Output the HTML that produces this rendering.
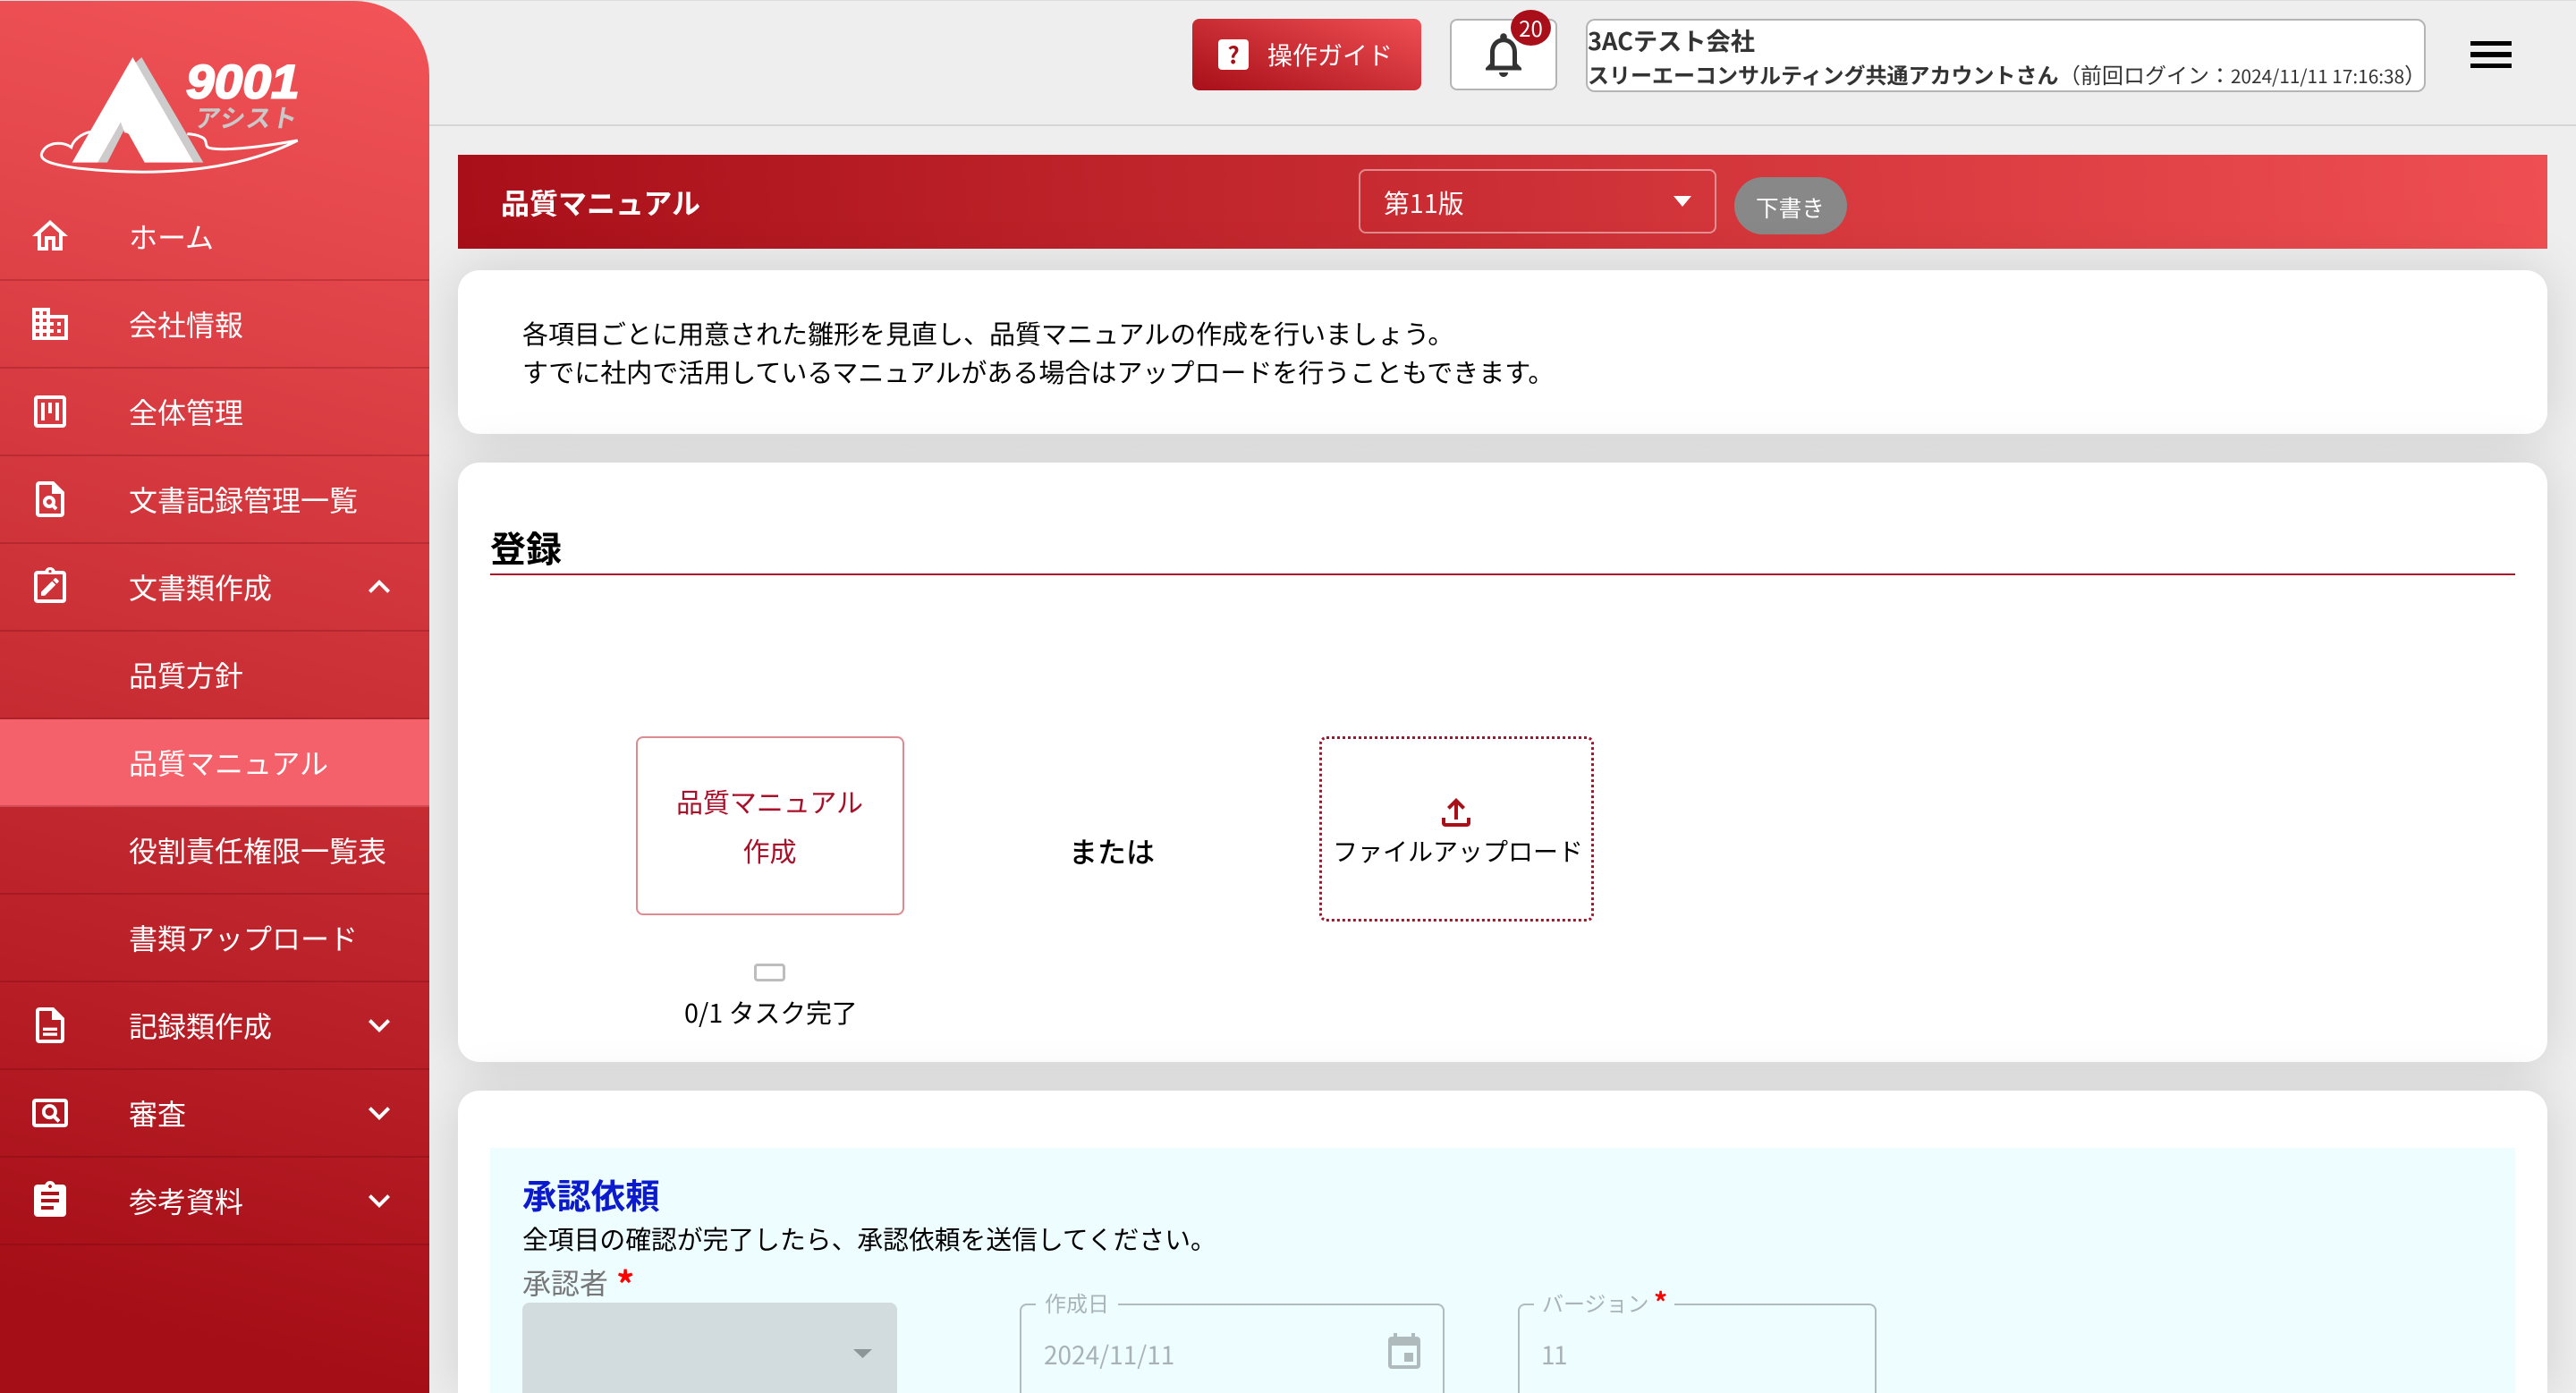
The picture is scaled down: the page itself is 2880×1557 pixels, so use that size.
<!DOCTYPE html>
<html lang="ja"><head><meta charset="utf-8"><title>品質マニュアル</title>
<style>
html,body{margin:0;padding:0;width:2880px;height:1557px;overflow:hidden}
body{background:#eee;font-family:"Noto Sans CJK JP","Liberation Sans",sans-serif;color:#000}
#page{position:relative;width:2880px;height:1557px;overflow:hidden;background:#eee}
.a{position:absolute}
.t{position:absolute;white-space:nowrap;line-height:40px}
svg{position:absolute;display:block}
#side{left:0;top:1px;width:480px;height:1556px;background:linear-gradient(14deg,#a60e17 7%,#f25458 100%);border-top-right-radius:84px;overflow:hidden;z-index:5}
.r{position:absolute;left:0;height:96px;line-height:96px;border-bottom:2px solid rgba(90,0,5,.22);color:#fff;font-size:32px;padding-left:144px;box-sizing:content-box;white-space:nowrap;width:336px}
.r svg{left:32px;top:24px;width:48px;height:48px;fill:#fff}
.r svg.c{left:400px}
.card{position:absolute;left:512px;width:2336px;background:#fff;border-radius:24px;box-shadow:0 0 60px rgba(0,0,0,.13)}
</style></head><body><div id="page">
<div class="a" style="left:0;top:0;width:2880px;height:1px;background:#ddd"></div>
<div class="a" style="left:480px;top:139px;width:2400px;height:2px;background:#d6d6d6"></div>

<!-- top bar -->
<div class="a" style="left:1333px;top:21px;width:256px;height:80px;border-radius:8px;background:linear-gradient(20deg,#a80f18,#ef4f54)"></div>
<div class="a" style="left:1362px;top:44px;width:34px;height:34px;border-radius:4px;background:#fff;color:#a80f18;font-weight:700;font-size:26px;line-height:34px;text-align:center">?</div>
<div class="t" style="left:1417px;top:41px;font-size:28px;color:#fff">操作ガイド</div>
<div class="a" style="left:1621px;top:21px;width:120px;height:80px;box-sizing:border-box;background:#fff;border:2px solid #b4b4b4;border-radius:8px"></div>
<svg style="left:1651px;top:31px" width="60" height="60" viewBox="0 0 24 24" fill="#333"><path d="M12 22c1.1 0 2-.9 2-2h-4c0 1.1.9 2 2 2zm6-6v-5c0-3.07-1.63-5.64-4.5-6.32V4c0-.83-.67-1.5-1.5-1.5s-1.5.67-1.5 1.5v.68C7.64 5.36 6 7.92 6 11v5l-2 2v1h16v-1l-2-2zm-2 1H8v-6c0-2.48 1.51-4.5 4-4.5s4 2.02 4 4.5v6z"/></svg>
<div class="a" style="left:1689px;top:11px;width:45px;height:40px;border-radius:50%;background:#a80f18;color:#fff;font-size:24px;line-height:40px;text-align:center">20</div>
<div class="a" style="left:1773px;top:21px;width:939px;height:82px;box-sizing:border-box;background:#fff;border:2px solid #b4b4b4;border-radius:10px"></div>
<div class="t" style="left:1775px;top:24px;font-size:27.2px;font-weight:700;color:#333">3ACテスト会社</div>
<div class="t" style="left:1775px;top:63px;font-size:24px;font-weight:700;color:#333">スリーエーコンサルティング共通アカウントさん</div>
<div class="t" style="left:2302px;top:63px;font-size:24px;color:#333">（前回ログイン：<span style="font-size:20.8px">2024/11/11 17:16:38</span>）</div>
<div class="a" style="left:2762px;top:46px;width:46px;height:5px;background:#000"></div>
<div class="a" style="left:2762px;top:58px;width:46px;height:6px;background:#000"></div>
<div class="a" style="left:2762px;top:71px;width:46px;height:5px;background:#000"></div>

<!-- title bar -->
<div class="a" style="left:512px;top:173px;width:2336px;height:105px;background:linear-gradient(87deg,#a80f18,#ef4f52 100%)"></div>
<div class="t" style="left:560px;top:206px;font-size:32px;font-weight:700;color:#fff">品質マニュアル</div>
<div class="a" style="left:1519px;top:189px;width:400px;height:72px;box-sizing:border-box;border:2px solid rgba(255,255,255,.45);border-radius:8px"></div>
<div class="t" style="left:1547px;top:207px;font-size:28.8px;color:#fff">第11版</div>
<svg style="left:1869px;top:219px" width="24" height="12" viewBox="0 0 24 12" fill="#fff"><path d="M2 0h20L12 12z"/></svg>
<div class="a" style="left:1939px;top:198px;width:126px;height:64px;border-radius:32px;background:#888"></div>
<div class="t" style="left:1963px;top:212px;font-size:25.6px;color:#fff">下書き</div>

<!-- card 1 -->
<div class="card" style="top:302px;height:183px"></div>
<div class="t" style="left:584px;top:352px;font-size:29px">各項目ごとに用意された雛形を見直し、品質マニュアルの作成を行いましょう。</div>
<div class="t" style="left:584px;top:395px;font-size:29px">すでに社内で活用しているマニュアルがある場合はアップロードを行うこともできます。</div>

<!-- card 2 -->
<div class="card" style="top:517px;height:670px"></div>
<div class="t" style="left:548px;top:591px;font-size:40px;font-weight:700">登録</div>
<div class="a" style="left:548px;top:641px;width:2264px;height:2px;background:#a8102a"></div>
<div class="a" style="left:711px;top:823px;width:300px;height:200px;box-sizing:border-box;border:2px solid #dd8a90;border-radius:8px"></div>
<div class="t" style="left:711px;width:299px;text-align:center;top:875px;font-size:30px;color:#a80f28">品質マニュアル</div>
<div class="t" style="left:711px;width:299px;text-align:center;top:930px;font-size:30px;color:#a80f28">作成</div>
<div class="a" style="left:843px;top:1077px;width:35px;height:20px;box-sizing:border-box;border:3.5px solid #bdbdbd;border-radius:4px"></div>
<div class="t" style="left:765px;top:1112px;font-size:28.8px">0/1 タスク完了</div>
<div class="t" style="left:1195px;top:931px;font-size:32px;font-weight:500">または</div>
<div class="a" style="left:1475px;top:823px;width:307px;height:207px;box-sizing:border-box;border:3px dotted #a8102a;border-radius:8px"></div>
<svg style="left:1604px;top:884px" width="48" height="48" viewBox="0 0 24 24" fill="#a80f18"><path d="M18 15v3H6v-3H4v3c0 1.1.9 2 2 2h12c1.1 0 2-.9 2-2v-3h-2zM7 9l1.41 1.41L11 7.83V16h2V7.83l2.59 2.58L17 9l-5-5-5 5z"/></svg>
<div class="t" style="left:1490px;top:931px;font-size:28px">ファイルアップロード</div>

<!-- card 3 -->
<div class="card" style="top:1219px;height:338px;border-radius:24px 24px 0 0"></div>
<div class="a" style="left:548px;top:1283px;width:2264px;height:274px;background:#eefdff"></div>
<div class="t" style="left:584px;top:1315px;font-size:38.4px;font-weight:700;color:#0a1acc">承認依頼</div>
<div class="t" style="left:584px;top:1365px;font-size:28.8px">全項目の確認が完了したら、承認依頼を送信してください。</div>
<div class="t" style="left:584px;top:1413px;font-size:32px;color:#777">承認者</div>
<div class="t" style="left:689px;top:1414px;font-size:40px;font-weight:700;color:#f00">*</div>
<div class="a" style="left:584px;top:1456px;width:419px;height:101px;background:#d2dcde;border-radius:8px 8px 0 0"></div>
<svg style="left:954px;top:1508px" width="21" height="10" viewBox="0 0 21 10" fill="#8c9698"><path d="M0 0h21L10.500 10z"/></svg>

<div class="a" style="left:1140px;top:1457px;width:475px;height:100px;box-sizing:border-box;border:2px solid #afbbbd;border-bottom:0;border-radius:8px 8px 0 0;clip-path:polygon(0 0,18px 0,18px 6px,110px 6px,110px 0,100% 0,100% 100%,0 100%)"></div>
<div class="t" style="left:1168px;top:1436px;font-size:24px;color:#aab4b6">作成日</div>
<div class="t" style="left:1167px;top:1494px;font-size:28px;color:#a8b2b4">2024/11/11</div>
<svg style="left:1546px;top:1488px" width="48" height="48" viewBox="0 0 24 24" fill="#aebabc"><path d="M17 12h-5v5h5v-5zM16 1v2H8V1H6v2H5c-1.11 0-1.99.9-1.99 2L3 19c0 1.1.89 2 2 2h14c1.1 0 2-.9 2-2V5c0-1.1-.9-2-2-2h-1V1h-2zm3 18H5V8h14v11z"/></svg>

<div class="a" style="left:1697px;top:1457px;width:401px;height:100px;box-sizing:border-box;border:2px solid #afbbbd;border-bottom:0;border-radius:8px 8px 0 0;clip-path:polygon(0 0,18px 0,18px 6px,175px 6px,175px 0,100% 0,100% 100%,0 100%)"></div>
<div class="t" style="left:1724px;top:1436px;font-size:24px;color:#aab4b6">バージョン</div>
<div class="t" style="left:1849px;top:1434px;font-size:30px;font-weight:700;color:#f00">*</div>
<div class="t" style="left:1723px;top:1494px;font-size:28px;letter-spacing:-1.5px;color:#a8b2b4">11</div>

<!-- sidebar -->
<div class="a" id="side">
 <svg style="left:20px;top:39px" width="340" height="170" viewBox="0 0 1020 510">
  <path d="M243 322C210 330 186 350 179 374C150 352 95 356 80 394C72 418 112 432 200 444C400 466 700 472 938 351C820 372 690 388 642 376C622 370 642 348 612 338C600 332 585 330 568 329" fill="none" stroke="#fff" stroke-width="9"/>
  <path d="M415 72L622 425H590L395 90z" fill="#ccc"/>
  <path d="M345 290L358 312L300 425H268z" fill="#ccc"/>
  <path d="M385 72L590 425H425L372 330C366 324 362 326 358 325L345 290L268 425H182z" fill="#fff"/>
  <text x="564" y="208" font-family="Liberation Sans" font-weight="700" font-style="italic" font-size="158" fill="#fff" stroke="#fff" stroke-width="6" textLength="380" lengthAdjust="spacingAndGlyphs">9001</text>
  <text x="0" y="0" transform="translate(590 306) skewX(-10)" font-family="Noto Sans CJK JP" font-weight="700" font-size="84" fill="#c9c9c9" textLength="342">アシスト</text>
 </svg>
 <div class="r" style="top:215px"><svg viewBox="0 0 24 24"><path d="M12 5.690l5 4.500V18h-2v-6H9v6H7v-7.810l5-4.500M12 3L2 12h3v8h6v-6h2v6h6v-8h3L12 3z"/></svg>ホーム</div>
 <div class="r" style="top:313px"><svg viewBox="0 0 24 24"><path d="M12 7V3H2v18h20V7H12zM6 19H4v-2h2v2zm0-4H4v-2h2v2zm0-4H4V9h2v2zm0-4H4V5h2v2zm4 12H8v-2h2v2zm0-4H8v-2h2v2zm0-4H8V9h2v2zm0-4H8V5h2v2zm10 12h-8v-2h2v-2h-2v-2h2v-2h-2V9h8v10zm-2-8h-2v2h2v-2zm0 4h-2v2h2v-2z"/></svg>会社情報</div>
 <div class="r" style="top:411px"><svg viewBox="0 0 24 24"><path d="M19 3H5c-1.100 0-2 .9-2 2v14c0 1.100.9 2 2 2h14c1.100 0 2-.9 2-2V5c0-1.100-.9-2-2-2zm0 16H5V5h14v14zM7 7h2v10H7zM11 7h2v6h-2zM15 7h2v10h-2z"/></svg>全体管理</div>
 <div class="r" style="top:509px"><svg viewBox="0 0 24 24"><path fill-rule="evenodd" d="M14 2H6C4.900 2 4 2.900 4 4v16c0 1.100.9 2 2 2h12c1.100 0 2-.9 2-2V8l-6-6zM6 20V4h7v5h5v11H6z"/><circle cx="11.500" cy="13.500" r="2.500" fill="none" stroke="#fff" stroke-width="2"/><path d="M13.300 15.300l2.200 2.200" stroke="#fff" stroke-width="2" fill="none"/></svg>文書記録管理一覧</div>
 <div class="r" style="top:607px"><svg viewBox="0 0 24 24"><path fill-rule="evenodd" d="M19 3h-4.180C14.400 1.840 13.300 1 12 1s-2.400.84-2.820 2H5c-1.100 0-2 .9-2 2v14c0 1.100.9 2 2 2h14c1.100 0 2-.9 2-2V5c0-1.100-.9-2-2-2zM5 5h14v14H5zM12 2.500a.8.8 0 1 1 0 1.600a.8.8 0 1 1 0-1.600z"/><path transform="translate(5.350 5.350) scale(.55)" d="M3 17.250V21h3.750L17.810 9.940l-3.750-3.750L3 17.250zM20.710 7.040c.39-.39.39-1.020 0-1.410l-2.340-2.340c-.39-.39-1.020-.39-1.410 0l-1.830 1.830 3.750 3.750 1.830-1.830z"/></svg>文書類作成<svg class="c" viewBox="0 0 24 24"><path d="M12 8l-6 6 1.410 1.410L12 10.830l4.590 4.580L18 14z"/></svg></div>
 <div class="r" style="top:705px">品質方針</div>
 <div class="r" style="top:803px;background:#f5616a">品質マニュアル</div>
 <div class="r" style="top:901px">役割責任権限一覧表</div>
 <div class="r" style="top:999px">書類アップロード</div>
 <div class="r" style="top:1097px"><svg viewBox="0 0 24 24"><path fill-rule="evenodd" d="M14 2H6C4.900 2 4 2.900 4 4v16c0 1.100.9 2 2 2h12c1.100 0 2-.9 2-2V8l-6-6zM6 20V4h7v5h5v11H6z"/><path d="M8 13.300h8v1.700H8zM8 16.200h8v1.700H8z"/></svg>記録類作成<svg class="c" viewBox="0 0 24 24"><path d="M7.410 8.590L12 13.170l4.590-4.580L18 10l-6 6-6-6 1.410-1.410z"/></svg></div>
 <div class="r" style="top:1195px"><svg viewBox="0 0 24 24"><path fill-rule="evenodd" d="M20 4H4C2.900 4 2 4.900 2 6v12c0 1.100.9 2 2 2h16c1.100 0 2-.9 2-2V6c0-1.100-.9-2-2-2zM4 6h16v12H4z"/><circle cx="11.700" cy="11.300" r="3.300" fill="none" stroke="#fff" stroke-width="1.900"/><path d="M14 13.700l3 3" stroke="#fff" stroke-width="2" fill="none"/></svg>審査<svg class="c" viewBox="0 0 24 24"><path d="M7.410 8.590L12 13.170l4.590-4.580L18 10l-6 6-6-6 1.410-1.410z"/></svg></div>
 <div class="r" style="top:1293px"><svg viewBox="0 0 24 24"><path d="M19 3h-4.180C14.400 1.840 13.300 1 12 1c-1.300 0-2.400.84-2.820 2H5c-1.100 0-2 .9-2 2v14c0 1.100.9 2 2 2h14c1.100 0 2-.9 2-2V5c0-1.100-.9-2-2-2zm-7 0c.55 0 1 .45 1 1s-.45 1-1 1-1-.45-1-1 .45-1 1-1zm2 14H7v-2h7v2zm3-4H7v-2h10v2zm0-4H7V7h10v2z"/></svg>参考資料<svg class="c" viewBox="0 0 24 24"><path d="M7.410 8.590L12 13.170l4.590-4.580L18 10l-6 6-6-6 1.410-1.410z"/></svg></div>
</div>
</div></body></html>
